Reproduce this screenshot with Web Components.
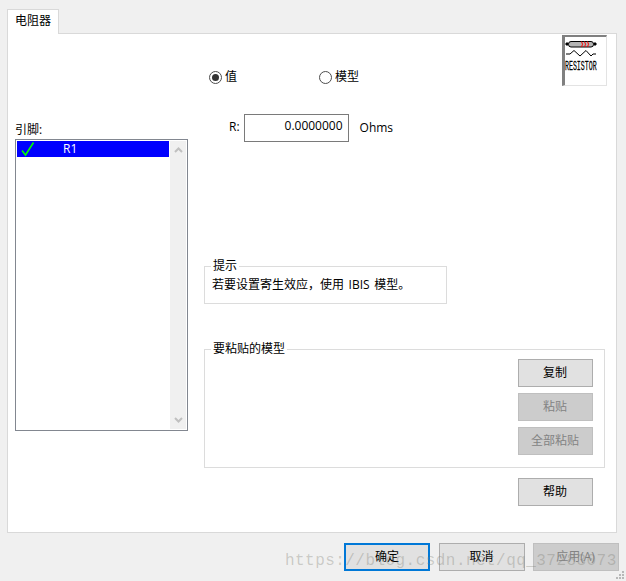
<!DOCTYPE html>
<html lang="zh">
<head>
<meta charset="utf-8">
<title>电阻器</title>
<style>
  html, body { margin: 0; padding: 0; background: #f0f0f0; }
  body {
    font: 12px/16px "Open Sans", "Noto Sans CJK SC", sans-serif;
    color: #000;
  }
</style>
</head>
<body>
<resistor-dialog></resistor-dialog>
<script>
class DlgButton extends HTMLElement {
  constructor() {
    super();
    this.attachShadow({ mode: 'open' });
    this.shadowRoot.innerHTML = `
      <style>
        :host {
          display: flex;
          align-items: center;
          justify-content: center;
          box-sizing: border-box;
          width: var(--btn-width, 75px);
          height: 28px;
          padding-right: 1px;
          background: #e1e1e1;
          border: 1px solid #adadad;
        }
        :host([disabled]) {
          background: #cccccc;
          border-color: #bfbfbf;
          color: #838383;
        }
        :host([default]) {
          padding-right: 0;
          border: 2px solid #0078d7;
        }
      </style>
      <slot></slot>
    `;
  }
}

class DlgRadio extends HTMLElement {
  constructor() {
    super();
    this.attachShadow({ mode: 'open' });
    this.shadowRoot.innerHTML = `
      <style>
        :host {
          display: inline-flex;
          align-items: center;
          gap: 3px;
        }
        .circle {
          box-sizing: border-box;
          width: 13px;
          height: 13px;
          border: 1px solid #4d4d4d;
          border-radius: 50%;
          background: #fff;
          display: flex;
          align-items: center;
          justify-content: center;
        }
        :host([checked]) .circle::after {
          content: '';
          width: 7px;
          height: 7px;
          border-radius: 50%;
          background: #333;
        }
      </style>
      <span class="circle"></span><slot></slot>
    `;
  }
}

class DlgGroup extends HTMLElement {
  constructor() {
    super();
    this.attachShadow({ mode: 'open' });
    this.shadowRoot.innerHTML = `
      <style>
        :host {
          display: block;
          box-sizing: border-box;
          border: 1px solid #dcdcdc;
        }
        .legend {
          width: fit-content;
          height: 16px;
          margin: -9px 0 0 6px;
          padding: 0 2px;
          background: #fff;
        }
      </style>
      <div class="legend">${this.getAttribute('label') || ''}</div>
      <slot></slot>
    `;
  }
}

class PinList extends HTMLElement {
  constructor() {
    super();
    this.attachShadow({ mode: 'open' });
    this.shadowRoot.innerHTML = `
      <style>
        :host {
          display: flex;
          box-sizing: border-box;
          height: 292px;
          border: 1px solid #828790;
          background: #fff;
          padding: 1px;
        }
        .rows { flex: 1; }
        .row {
          display: flex;
          align-items: center;
          height: 16px;
          background: #0000ff;
          color: #fff;
          margin-right: 1px;
        }
        .row svg { margin-left: 4px; }
        .row span { margin-left: 28px; }
        .bar {
          width: 16px;
          background: #f0f0f0;
          display: flex;
          flex-direction: column;
          justify-content: space-between;
          align-items: center;
          padding: 6px 0;
        }
      </style>
      <div class="rows">
        <div class="row">
          <svg width="14" height="16" viewBox="0 0 14 16">
            <path d="M1 9.5 L4.5 14 L12.5 1.5" fill="none" stroke="#00ff00" stroke-width="1.6"/>
          </svg>
          <span>R1</span>
        </div>
      </div>
      <div class="bar">
        <svg width="9" height="6" viewBox="0 0 9 6"><path d="M1 5 L4.5 1.5 L8 5" fill="none" stroke="#c0c0c0" stroke-width="2"/></svg>
        <svg width="9" height="6" viewBox="0 0 9 6"><path d="M1 1 L4.5 4.5 L8 1" fill="none" stroke="#c0c0c0" stroke-width="2"/></svg>
      </div>
    `;
  }
}

class ResistorIcon extends HTMLElement {
  constructor() {
    super();
    this.attachShadow({ mode: 'open' });
    this.shadowRoot.innerHTML = `
      <style>
        :host {
          display: block;
          box-sizing: border-box;
          width: 45px;
          height: 51px;
          background: #fff;
          border-style: solid;
          border-width: 2px 1px 1px 3px;
          border-color: #808080 #e3e3e3 #e3e3e3 #808080;
        }
        svg { display: block; }
        text {
          font: 12px "Liberation Mono", monospace;
          fill: #000;
          stroke: #000;
          stroke-width: 0.25px;
        }
      </style>
      <svg width="41" height="48" viewBox="0 0 41 48">
        <path d="M0 7 H4 M28 7 H32" stroke="#000"/>
        <rect x="1" y="5.500" width="2" height="3" fill="#000"/>
        <rect x="29" y="5.500" width="2" height="3" fill="#000"/>
        <rect x="3.500" y="4.500" width="25" height="5.500" rx="2.500" fill="#b4b4b4" stroke="#000"/>
        <path d="M16.500 4.500 q2 2.700 0 5.500 M19.500 4.500 q2 2.700 0 5.500 M22.500 4.500 q2 2.700 0 5.500" fill="none" stroke="#ff0000"/>
        <path d="M1 17 H5 L9 13.500 L15 19 L21 13.500 L26 19 L28 17 H31" fill="none" stroke="#000"/>
        <text transform="translate(0 33) scale(.55 1)">RESISTOR</text>
      </svg>
    `;
  }
}

class ResistorDialog extends HTMLElement {
  constructor() {
    super();
    this.attachShadow({ mode: 'open' });
    this.shadowRoot.innerHTML = `
      <style>
        :host {
          display: block;
          position: relative;
          width: 626px;
          height: 581px;
          overflow: hidden;
          background: #f0f0f0;
        }
        .tabs {
          display: flex;
          padding: 9px 0 0 7px;
        }
        .tab {
          box-sizing: border-box;
          width: 52px;
          height: 25px;
          margin-bottom: -1px;
          padding: 3px 0 0 7px;
          background: #fff;
          border: 1px solid #d9d9d9;
          border-bottom: 0;
          position: relative;
        }
        .panel {
          box-sizing: border-box;
          display: grid;
          grid-template-columns: 173px 401px;
          column-gap: 16px;
          width: 610px;
          height: 500px;
          margin-left: 7px;
          padding-left: 7px;
          background: #fff;
          border: 1px solid #d9d9d9;
        }
        .left { padding-top: 88px; }
        .left label { display: block; margin-bottom: 1px; }
        .right { display: flex; flex-direction: column; }
        .head {
          display: flex;
          align-items: flex-start;
          height: 80px;
          padding-left: 5px;
        }
        .radios {
          display: grid;
          grid-template-columns: 110px auto;
          margin-top: 35px;
        }
        resistor-icon { margin: 1px -2px 0 auto; }
        .value {
          display: flex;
          align-items: center;
          height: 28px;
          padding-left: 25px;
        }
        .value > span:first-child { margin-bottom: 2px; }
        .input {
          box-sizing: border-box;
          width: 105px;
          height: 28px;
          margin-left: 4px;
          padding: 3px 5px 0 0;
          border: 1px solid #7a7a7a;
          text-align: right;
          line-height: 16px;
        }
        .unit { margin-left: 11px; }
        .hint { margin-top: 124px; width: 243px; height: 38px; }
        .hint-text { padding: 3px 0 0 7px; word-spacing: 1.5px; }
        .paste { margin-top: 45px; height: 119px; }
        .paste-btns {
          display: flex;
          flex-direction: column;
          align-items: flex-end;
          gap: 6px;
          padding: 2px 11px 0 0;
        }
        .help { align-self: flex-end; margin: 10px 12px 0 0; }
        .footer {
          display: flex;
          justify-content: flex-end;
          gap: 8px;
          padding: 10px 7px 0 0;
          --btn-width: 86px;
        }
        .footer dlg-button:first-child { margin-right: 1px; }
        .grip {
          position: absolute;
          right: 1px;
          bottom: 1px;
        }
        .watermark {
          position: absolute;
          left: 285px;
          top: 551px;
          font: 16px/20px "Liberation Mono", monospace;
          letter-spacing: 0.45px;
          color: rgba(120, 120, 110, 0.32);
          white-space: nowrap;
        }
      </style>
      <div class="tabs"><div class="tab">电阻器</div></div>
      <div class="panel">
        <div class="left">
          <label>引脚:</label>
          <pin-list></pin-list>
        </div>
        <div class="right">
          <div class="head">
            <div class="radios">
              <dlg-radio checked>值</dlg-radio>
              <dlg-radio>模型</dlg-radio>
            </div>
            <resistor-icon></resistor-icon>
          </div>
          <div class="value">
            <span>R:</span>
            <div class="input">0.0000000</div>
            <span class="unit">Ohms</span>
          </div>
          <dlg-group class="hint" label="提示">
            <div class="hint-text">若要设置寄生效应，使用 IBIS 模型。</div>
          </dlg-group>
          <dlg-group class="paste" label="要粘贴的模型">
            <div class="paste-btns">
              <dlg-button>复制</dlg-button>
              <dlg-button disabled>粘贴</dlg-button>
              <dlg-button disabled>全部粘贴</dlg-button>
            </div>
          </dlg-group>
          <dlg-button class="help">帮助</dlg-button>
        </div>
      </div>
      <div class="footer">
        <dlg-button default>确定</dlg-button>
        <dlg-button>取消</dlg-button>
        <dlg-button disabled>应用(A)</dlg-button>
      </div>
      <svg class="grip" width="10" height="10" viewBox="0 0 10 10" fill="#b8b8b8">
        <rect x="7" y="1" width="2" height="2"/>
        <rect x="4" y="4" width="2" height="2"/><rect x="7" y="4" width="2" height="2"/>
        <rect x="1" y="7" width="2" height="2"/><rect x="4" y="7" width="2" height="2"/><rect x="7" y="7" width="2" height="2"/>
      </svg>
      <div class="watermark">https://blog.csdn.net/qq_37283073</div>
    `;
  }
}

customElements.define('dlg-button', DlgButton);
customElements.define('dlg-radio', DlgRadio);
customElements.define('dlg-group', DlgGroup);
customElements.define('pin-list', PinList);
customElements.define('resistor-icon', ResistorIcon);
customElements.define('resistor-dialog', ResistorDialog);
</script>
</body>
</html>
